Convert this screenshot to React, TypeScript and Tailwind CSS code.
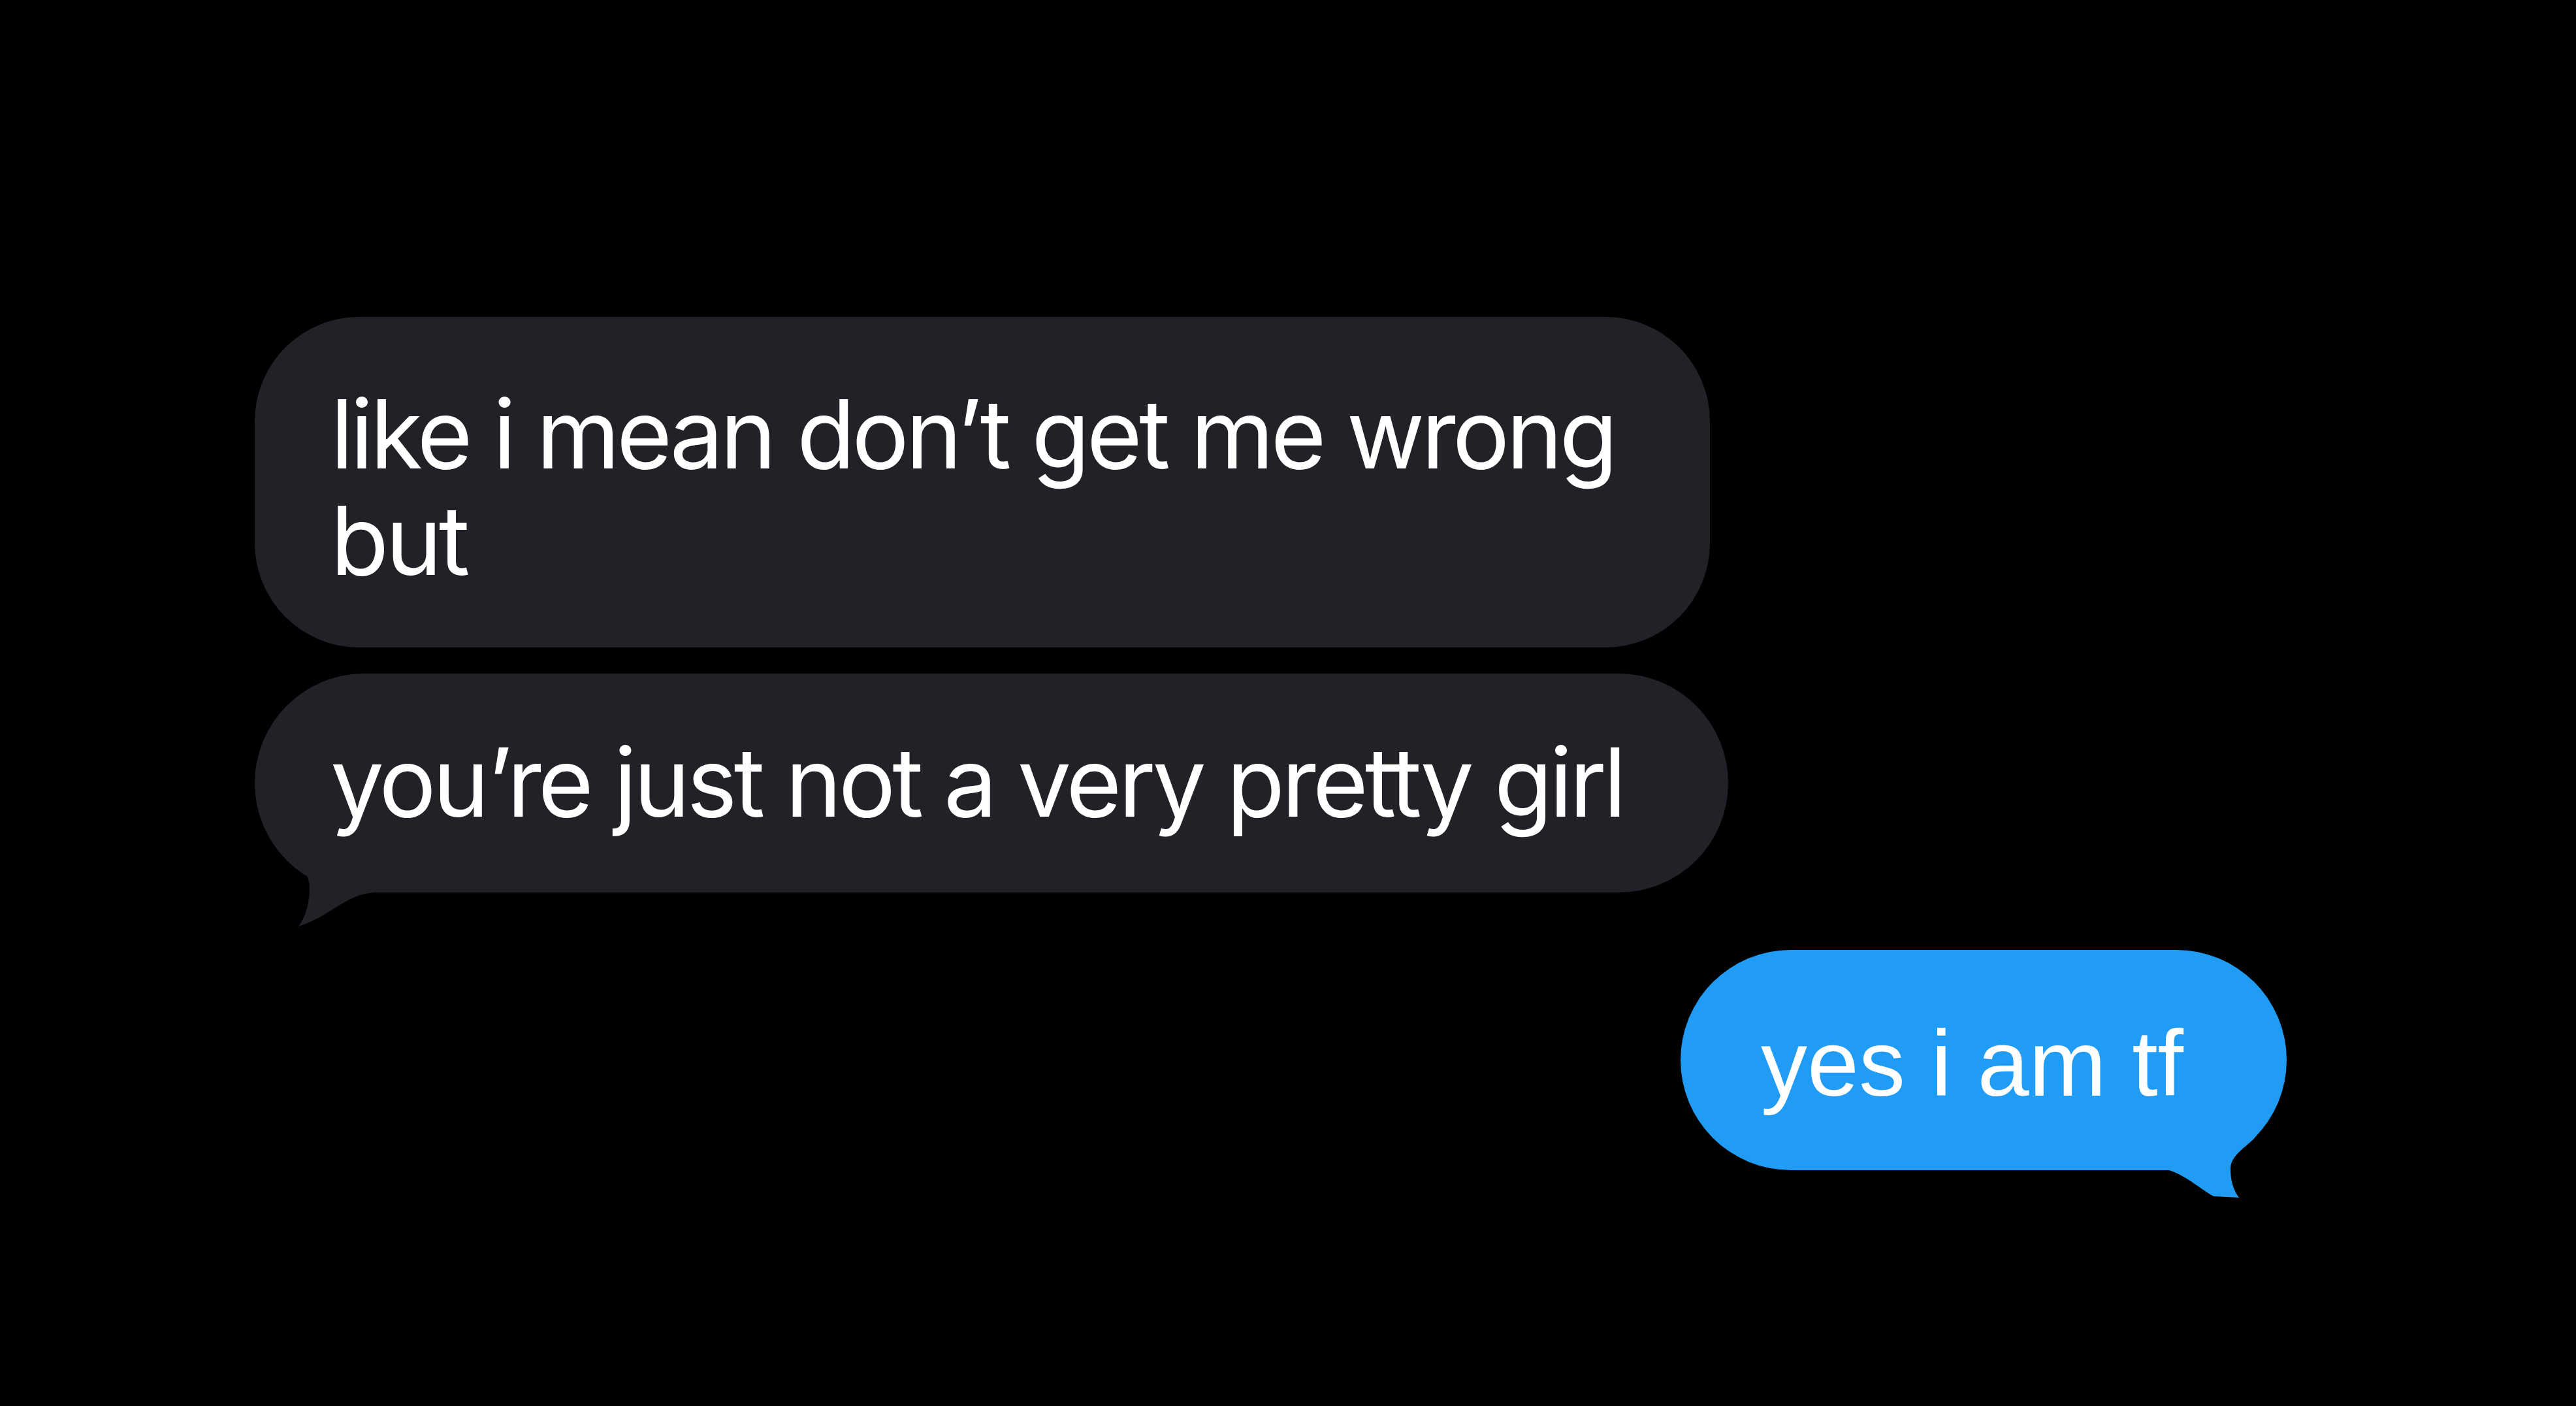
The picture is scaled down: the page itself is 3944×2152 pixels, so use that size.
import React from 'react';

const GRAY = 'bg-[#202227]';

const GrayTail = () => (
  <svg
    className="absolute left-0 top-[calc(100%-60px)] w-[200px] h-[120px]"
    viewBox="0 0 200 120"
    fill="#202227"
  >
    <path d="M60 0 C75 20 83 38 84 50 C84 75 79 96 67 112 C118 96 138 62 186 60 L186 0 Z" />
  </svg>
);

const BlueTail = () => (
  <svg
    className="absolute right-0 top-[calc(100%-100px)] w-[200px] h-[145px]"
    viewBox="0 0 200 145"
    fill="#209cf5"
  >
    <path d="M22 20 L150 20 L150 52 C130 70 114 80 114 98 C114 115 118 130 127 142 L88 140 C70 130 45 108 20 100 L20 20 Z" />
  </svg>
);

export default function App() {
  return (
    <div className="min-h-screen w-full bg-black flex flex-col pt-[485px] pl-[390px] pr-[443px] text-white">
      <div
        className={`relative w-[2228px] h-[506px] rounded-[160px] ${GRAY} pl-[116px] pt-[98px] text-[146px] leading-[163px] tracking-[-5px] [font-family:Inter,sans-serif] whitespace-nowrap`}
      >
        like i mean don’t get me wrong
        <br />
        but
      </div>

      <div
        className={`relative mt-[40px] w-[2256px] h-[335px] rounded-full ${GRAY} pl-[116px] pt-[85px] text-[146px] leading-[163px] tracking-[-5px] [font-family:Inter,sans-serif] whitespace-nowrap`}
      >
        <GrayTail />
        <span className="relative">you’re just not a very pretty girl</span>
      </div>

      <div className="relative mt-[88px] self-end w-[928px] h-[337px] rounded-full bg-[#209cf5] pl-[123px] pt-[94px] text-[142px] leading-[160px] [font-family:'Liberation_Sans',Arial,sans-serif] whitespace-nowrap">
        <BlueTail />
        <span className="relative">yes i am tf</span>
      </div>
    </div>
  );
}
